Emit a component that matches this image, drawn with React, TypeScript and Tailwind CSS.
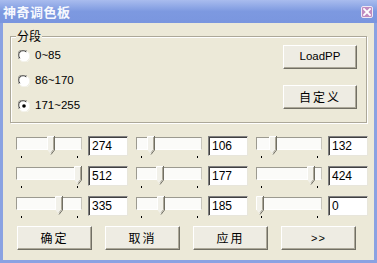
import React from "react";

const font = "'Liberation Sans', 'Noto Sans CJK SC', sans-serif";
const cjk = "'Noto Sans CJK SC', 'Liberation Sans', sans-serif";

function Radio({ checked }: { checked?: boolean }) {
  return (
    <svg width="12" height="12" viewBox="0 0 12 12" className="shrink-0">
      <circle cx="6" cy="6" r="5.5" fill="#ffffff" />
      <path d="M1.2 9 A5.2 5.2 0 0 1 9 1.2" fill="none" stroke="#8a8a86" strokeWidth="1" />
      <path d="M2 8.2 A4.2 4.2 0 0 1 8.2 2" fill="none" stroke="#404040" strokeWidth="1" />
      <path d="M2.8 10.6 A5.2 5.2 0 0 0 10.6 2.8" fill="none" stroke="#f4f3ee" strokeWidth="1" />
      {checked && <circle cx="6" cy="6" r="1.8" fill="#000" />}
    </svg>
  );
}

function Btn({ children, w = "w-[75px]", h = "h-[24px]" }: { children: React.ReactNode; w?: string; h?: string }) {
  return (
    <div
      className={`${w} ${h} flex items-center justify-center bg-[#eeece3] border border-t-white border-l-white border-r-[#716f64] border-b-[#716f64] shadow-[inset_-1px_-1px_0_#aca899] text-[12px] text-black tracking-[2px]`}
      style={{ fontFamily: cjk }}
    >
      {children}
    </div>
  );
}

function Slider({ pos }: { pos: number }) {
  return (
    <div className="relative w-[66px] h-[22px] shrink-0">
      <div className="mt-[1px] h-[13px] bg-[#fbfbf9] border border-t-[#9c9a90] border-l-[#9c9a90] border-r-[#c8c6bc] border-b-white" />
      <svg
        width="8"
        height="19"
        viewBox="0 0 8 19"
        className="absolute top-0"
        style={{ left: pos }}
      >
        <polygon points="0.5,0.5 7.5,0.5 7.5,14 4,18.5 0.5,14" fill="#f2f1ea" />
        <polyline points="0.5,14 0.5,0.5 7,0.5" fill="none" stroke="#ffffff" strokeWidth="1" />
        <polyline points="7.5,0 7.5,14 4,18.5" fill="none" stroke="#716f64" strokeWidth="1" />
        <polyline points="6.5,1 6.5,13.5 4,16.8" fill="none" stroke="#aca899" strokeWidth="1" />
      </svg>
      <div className="absolute top-[20px] left-[5px] w-[1px] h-[2px] bg-black" />
      <div className="absolute top-[20px] right-[4px] w-[1px] h-[2px] bg-black" />
    </div>
  );
}

function Box({ v }: { v: string }) {
  return (
    <div
      className="w-[40px] h-[20px] shrink-0 bg-white border border-t-[#808080] border-l-[#808080] border-r-[#e8e6dc] border-b-[#e8e6dc] shadow-[inset_1px_1px_0_#404040] flex items-center pl-[3px] text-[12px] text-black"
      style={{ fontFamily: font }}
    >
      {v}
    </div>
  );
}

const rows: { pos: number; v: string }[][] = [
  [
    { pos: 31, v: "274" },
    { pos: 11, v: "106" },
    { pos: 13, v: "132" },
  ],
  [
    { pos: 58, v: "512" },
    { pos: 20, v: "177" },
    { pos: 51, v: "424" },
  ],
  [
    { pos: 39, v: "335" },
    { pos: 21, v: "185" },
    { pos: 0, v: "0" },
  ],
];

export default function App() {
  return (
    <div
      className="w-[377px] h-[263px] flex flex-col bg-[#8aa2e2] overflow-hidden"
      style={{ fontFamily: font }}
    >
      {/* title bar */}
      <div className="h-[23px] shrink-0 flex items-center justify-between pl-[3px] pr-[4px] bg-gradient-to-b from-[#a9bcee] via-[#7d99e0] to-[#7a96df]">
        <span
          className="text-[13px] font-bold text-[#f6f8fe] tracking-[0.5px] leading-none"
          style={{ fontFamily: cjk }}
        >
          神奇调色板
        </span>
        <div className="w-[12px] h-[12px] rounded-[2px] border border-[#f0e8f4] bg-[#c08cc0] flex items-center justify-center">
          <svg width="8" height="8" viewBox="0 0 8 8">
            <path d="M1 1 L7 7 M7 1 L1 7" stroke="#ffffff" strokeWidth="1.8" strokeLinecap="square" />
          </svg>
        </div>
      </div>

      {/* body */}
      <div className="mx-[3px] mb-[3px] flex-1 bg-[#ece9d8] flex flex-col">
        {/* group box */}
        <div className="relative mt-[13px] ml-[7px] w-[357px] h-[87px] border border-[#aca899] shadow-[inset_1px_1px_0_#ffffff,1px_1px_0_#ffffff] flex justify-between">
          <span
            className="absolute -top-[9px] left-[5px] bg-[#ece9d8] px-[1px] text-[12px] leading-[16px] text-black"
            style={{ fontFamily: cjk }}
          >
            分段
          </span>
          <div className="flex flex-col gap-[13px] pt-[13px] pl-[7px]">
            {["0~85", "86~170", "171~255"].map((t, i) => (
              <div key={t} className="flex items-center gap-[5px] h-[12px]">
                <Radio checked={i === 2} />
                <span className="text-[11.5px] text-black leading-none">{t}</span>
              </div>
            ))}
          </div>
          <div className="flex flex-col gap-[16px] pt-[8px] pr-[9px]">
            <Btn w="w-[74px]" h="h-[24px]">
              <span className="tracking-normal text-[11.5px]" style={{ fontFamily: font }}>LoadPP</span>
            </Btn>
            <Btn w="w-[74px]" h="h-[24px]">自定义</Btn>
          </div>
        </div>

        {/* slider rows */}
        <div className="mt-[13px] ml-[13px] flex flex-col gap-[8px]">
          {rows.map((r, ri) => (
            <div key={ri} className="flex items-start gap-[8px] h-[22px]">
              {r.map((c, ci) => (
                <div key={ci} className="flex items-start gap-[6px]">
                  <Slider pos={c.pos} />
                  <Box v={c.v} />
                </div>
              ))}
            </div>
          ))}
        </div>

        {/* buttons */}
        <div className="mt-[8px] ml-[14px] flex gap-[13px]">
          <Btn>确定</Btn>
          <Btn>取消</Btn>
          <Btn>应用</Btn>
          <Btn>
            <span className="text-[11px] tracking-[1px]" style={{ fontFamily: font }}>&gt;&gt;</span>
          </Btn>
        </div>
      </div>
    </div>
  );
}
